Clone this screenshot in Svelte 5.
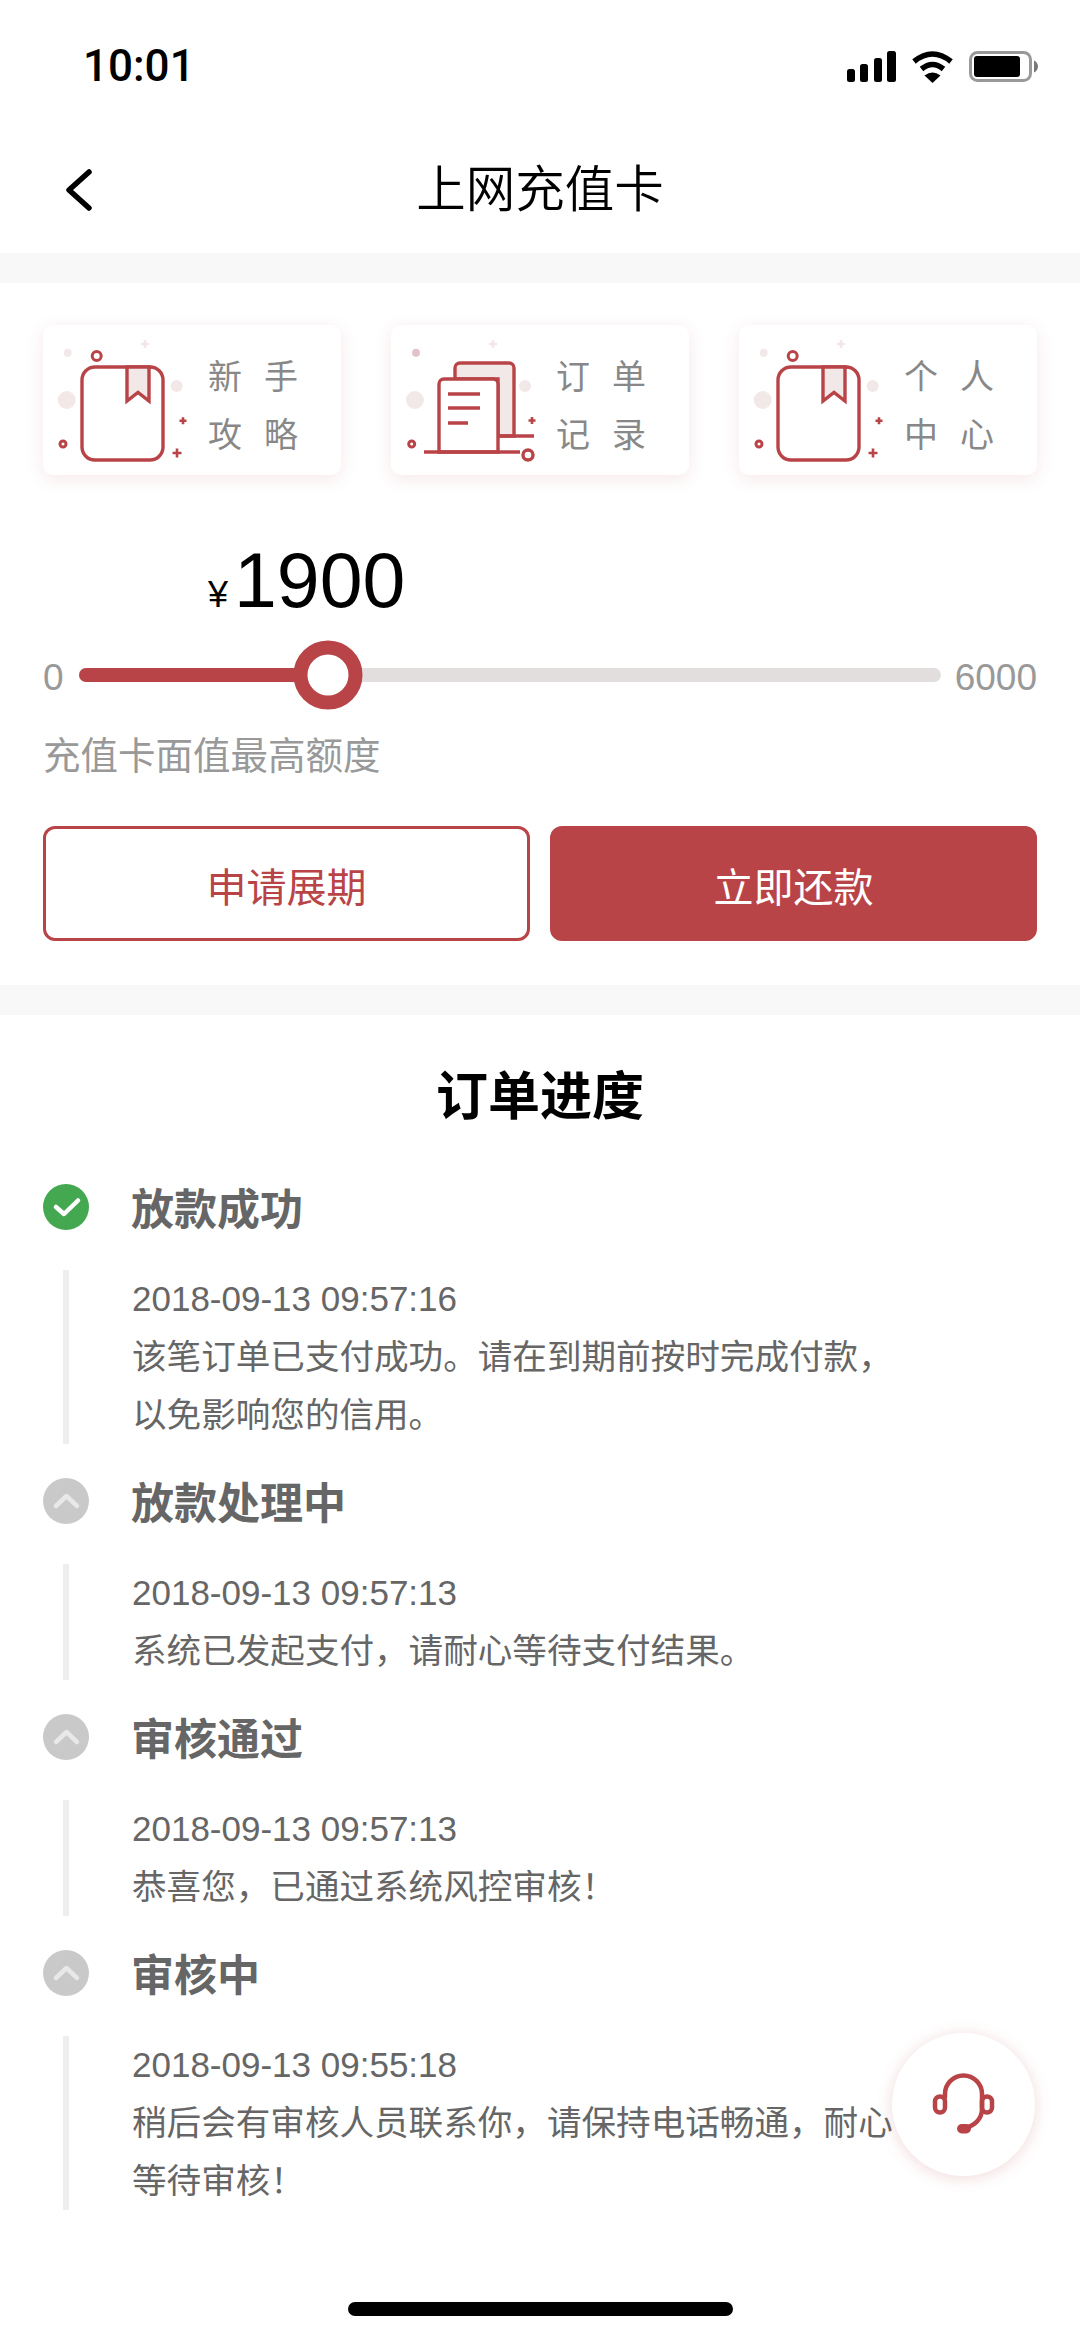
<script lang="ts">
  const steps = [
    { title: '放款成功', done: true, time: '2018-09-13 09:57:16', lines: ['该笔订单已支付成功。请在到期前按时完成付款，', '以免影响您的信用。'] },
    { title: '放款处理中', done: false, time: '2018-09-13 09:57:13', lines: ['系统已发起支付，请耐心等待支付结果。'] },
    { title: '审核通过', done: false, time: '2018-09-13 09:57:13', lines: ['恭喜您，已通过系统风控审核！'] },
    { title: '审核中', done: false, time: '2018-09-13 09:55:18', lines: ['稍后会有审核人员联系你，请保持电话畅通，耐心', '等待审核！'] }
  ];
  // thumb sits a bit left of the true 1900/6000 position in the design
  const sliderPos = 28.9;
  const red = '#b94448';
  const tint = '#f3e8e8';
</script>

{#snippet sparkle(x: number, y: number, s: number, color: string)}
  <path d="M{x - s} {y}H{x + s}M{x} {y - s}V{y + s}" stroke={color} stroke-width="2.6" fill="none" />
{/snippet}

{#snippet bookIcon()}
  <svg class="card-icon" viewBox="0 0 150 150" aria-hidden="true">
    <circle cx="24.7" cy="27.7" r="4" fill={tint} />
    <circle cx="23.7" cy="75" r="9" fill={tint} />
    <circle cx="133.7" cy="61" r="6" fill={tint} />
    {@render sparkle(102, 19, 4, tint)}
    {@render sparkle(140, 95.7, 3.5, red)}
    {@render sparkle(134, 128, 4.5, red)}
    <circle cx="53.7" cy="31" r="4.5" fill="none" stroke={red} stroke-width="3" />
    <circle cx="20" cy="119" r="3" fill="none" stroke={red} stroke-width="3" />
    <rect x="39" y="42" width="81" height="93" rx="13" fill="#fff" stroke={red} stroke-width="3.4" />
    <path d="M84 42V76L95 67.500L106 76V42Z" fill={tint} stroke={red} stroke-width="3.4" />
  </svg>
{/snippet}

{#snippet docsIcon()}
  <svg class="card-icon" viewBox="0 0 150 150" aria-hidden="true">
    <circle cx="25" cy="27.7" r="4" fill="#e2c3c7" />
    <circle cx="24" cy="75" r="9" fill={tint} />
    <circle cx="134" cy="61" r="6" fill={tint} />
    {@render sparkle(102, 19, 4, tint)}
    {@render sparkle(141, 95.5, 3.5, red)}
    <circle cx="20.700" cy="119" r="3" fill="none" stroke={red} stroke-width="3" />
    <path d="M64 54V43a5 5 0 0 1 5-5H118a5 5 0 0 1 5 5V111H107V54Z" fill={tint} stroke={red} stroke-width="3.4" />
    <path d="M48 127V59a5 5 0 0 1 5-5H102a5 5 0 0 1 5 5V127Z" fill="#fff" stroke={red} stroke-width="3.4" />
    <path d="M57 69H89M57 83H89M57 98H77M33 127H129M107 111H143" fill="none" stroke={red} stroke-width="3.4" />
    <circle cx="137" cy="130" r="5" fill="none" stroke={red} stroke-width="3.4" />
  </svg>
{/snippet}

<div class="page">
  <div class="status">
    <span class="time">10:01</span>
    <div class="status-icons">
      <svg class="signal" viewBox="0 0 49 31" aria-hidden="true">
        <rect x="0" y="18" width="8" height="13" rx="2.500" />
        <rect x="13" y="13" width="8" height="18" rx="2.500" />
        <rect x="27" y="7" width="8" height="24" rx="2.500" />
        <rect x="40" y="0" width="9" height="31" rx="2.500" />
      </svg>
      <svg class="wifi" viewBox="0 0 43 33" aria-hidden="true">
        <path d="M3 11.500Q21.500 -3.500 40 11.500M10.500 19Q21.500 10 32.500 19" fill="none" stroke="#000" stroke-width="5.500" />
        <path d="M21.500 33L13.500 25.500Q21.500 19.500 29.500 25.500Z" />
      </svg>
      <svg class="battery" viewBox="0 0 69 31" aria-hidden="true">
        <rect x="1.500" y="1.500" width="60" height="28" rx="7" fill="none" stroke="#999" stroke-width="3" />
        <rect x="5" y="5" width="46" height="21" rx="3" />
        <path d="M65 9.500C67.500 10.500 69 13 69 15.500S67.500 20.500 65 21.500Z" fill="#777" />
      </svg>
    </div>
  </div>

  <div class="nav">
    <svg class="back" viewBox="0 0 28 44" aria-hidden="true">
      <path d="M24 4L4 22L24 40" fill="none" stroke="#000" stroke-width="5.500" stroke-linecap="round" stroke-linejoin="round" />
    </svg>
    <h1>上网充值卡</h1>
  </div>

  <div class="band"></div>

  <section class="top">
    <div class="cards">
      <div class="card">
        {@render bookIcon()}
        <div class="card-text"><span>新手</span><span>攻略</span></div>
      </div>
      <div class="card">
        {@render docsIcon()}
        <div class="card-text"><span>订单</span><span>记录</span></div>
      </div>
      <div class="card">
        {@render bookIcon()}
        <div class="card-text"><span>个人</span><span>中心</span></div>
      </div>
    </div>

    <div class="amount"><span class="yen">¥</span><span class="value">1900</span></div>

    <div class="slider">
      <span class="limit">0</span>
      <div class="track">
        <div class="fill" style="width: {sliderPos}%"></div>
        <div class="thumb" style="left: {sliderPos}%"></div>
      </div>
      <span class="limit">6000</span>
    </div>

    <p class="hint">充值卡面值最高额度</p>

    <div class="actions">
      <button type="button" class="btn btn-outline">申请展期</button>
      <button type="button" class="btn btn-solid">立即还款</button>
    </div>
  </section>

  <div class="band"></div>

  <h2>订单进度</h2>

  <div class="steps">
    {#each steps as step}
      <div class="step">
        <div class="step-head">
          <span class="dot" class:dot--done={step.done}>
            <svg viewBox="0 0 46 46" aria-hidden="true">
              {#if step.done}
                <path d="M13 23L21 30L35 16.500" fill="none" stroke="#fff" stroke-width="4.500" stroke-linecap="round" stroke-linejoin="round" />
              {:else}
                <path d="M13 28L23.500 18L34 28" fill="none" stroke="#e8e8e8" stroke-width="4.500" stroke-linecap="round" stroke-linejoin="round" />
              {/if}
            </svg>
          </span>
          <h3>{step.title}</h3>
        </div>
        <div class="step-body">
          <div class="stamp">{step.time}</div>
          {#each step.lines as line}
            <div class="line">{line}</div>
          {/each}
        </div>
      </div>
    {/each}
  </div>

  <div class="home-bar"></div>

  <button type="button" class="fab" aria-label="客服">
    <svg viewBox="0 0 143 143" aria-hidden="true">
      <path d="M53 64V61a18.500 18.500 0 0 1 37 0V76C90 86 82 94 71 95" fill="none" stroke={red} stroke-width="4.500" stroke-linecap="round" />
      <rect x="43" y="63.500" width="10" height="16" rx="5" fill="none" stroke={red} stroke-width="4.500" />
      <rect x="90" y="63.500" width="10" height="16" rx="5" fill="none" stroke={red} stroke-width="4.500" />
      <rect x="65" y="91" width="14" height="9.500" rx="4.700" fill={red} />
    </svg>
  </button>
</div>

<style>
  :global(body) {
    background: #fff;
  }
  .page {
    position: relative;
    width: 1080px;
    height: 2339px;
    overflow: hidden;
    background: #fff;
    font-family: "Liberation Sans", "Noto Sans CJK SC", sans-serif;
  }
  .status {
    display: flex;
    align-items: center;
    justify-content: space-between;
    height: 132px;
    padding: 0 42px 0 83px;
    box-sizing: border-box;
  }
  .time {
    font-family: Roboto, sans-serif;
    font-weight: 500;
    font-size: 44px;
    line-height: 1;
    color: #000;
  }
  .status-icons {
    display: flex;
    align-items: center;
    gap: 15px;
  }
  .signal { width: 49px; height: 31px; }
  .wifi { width: 43px; height: 33px; }
  .battery { width: 69px; height: 31px; }
  .nav {
    position: relative;
    display: flex;
    align-items: center;
    justify-content: center;
    height: 121px;
  }
  .back {
    position: absolute;
    left: 65px;
    top: 36px;
    width: 28px;
    height: 44px;
  }
  h1 {
    margin: 0 0 6px;
    font-size: 49.5px;
    font-weight: 350;
    line-height: 1;
    color: #000;
  }
  .band {
    height: 30px;
    background: #f8f8f8;
  }
  .top {
    padding: 42px 43px 44px;
  }
  .cards {
    display: grid;
    grid-template-columns: repeat(3, 298px);
    justify-content: space-between;
  }
  .card {
    display: flex;
    height: 150px;
    gap: 15px;
    border-radius: 10px;
    background: #fff;
    box-shadow: 0 4px 18px rgba(185, 68, 72, 0.12);
  }
  .card-icon {
    flex: none;
    width: 150px;
    height: 150px;
  }
  .card-text {
    display: flex;
    flex-direction: column;
    padding-top: 23px;
    font-size: 34px;
    line-height: 58px;
    letter-spacing: 22px;
    color: #888;
  }
  .amount {
    display: flex;
    align-items: baseline;
    gap: 6px;
    height: 80px;
    margin-top: 65px;
    padding-left: 165px;
    line-height: 80px;
    color: #000;
  }
  .yen { font-size: 36px; }
  .value { font-size: 77px; }
  .slider {
    display: flex;
    align-items: center;
    height: 69px;
    margin-top: 20px;
  }
  .limit {
    padding-top: 6px;
    font-size: 37px;
    color: #999;
  }
  .track {
    position: relative;
    flex: 1;
    height: 14px;
    margin: 0 14px 0 15px;
    border-radius: 7px;
    background: #e2dede;
  }
  .fill {
    height: 100%;
    border-radius: 7px 0 0 7px;
    background: #b94448;
  }
  .thumb {
    position: absolute;
    top: 50%;
    width: 69px;
    height: 69px;
    box-sizing: border-box;
    border: 14px solid #b94448;
    border-radius: 50%;
    background: #fff;
    transform: translate(-50%, -50%);
  }
  .hint {
    margin: 22px 0 0;
    font-size: 37.5px;
    line-height: 50px;
    color: #999;
  }
  .actions {
    display: grid;
    grid-template-columns: 1fr 1fr;
    gap: 20px;
    margin-top: 45px;
  }
  .btn {
    height: 115px;
    padding: 2px 0 0;
    border: 3px solid #b94448;
    border-radius: 12px;
    font-family: inherit;
    font-size: 40px;
  }
  .btn-outline {
    background: #fff;
    color: #b94448;
  }
  .btn-solid {
    background: #b94448;
    color: #fff;
  }
  h2 {
    margin: 52px 0 57px;
    font-size: 52px;
    font-weight: 700;
    line-height: 60px;
    text-align: center;
    color: #000;
  }
  .steps {
    padding: 0 43px;
  }
  .step {
    padding-bottom: 34px;
  }
  .step:last-child {
    padding-bottom: 0;
  }
  .step-head {
    display: flex;
    align-items: center;
    gap: 42px;
    height: 46px;
  }
  .dot {
    flex: none;
    width: 46px;
    height: 46px;
    border-radius: 50%;
    background: #c9c9c9;
  }
  .dot svg {
    display: block;
    width: 46px;
    height: 46px;
  }
  .dot--done {
    background: #43a84f;
  }
  h3 {
    margin: 5px 0 0;
    font-size: 43px;
    font-weight: 700;
    line-height: 46px;
    color: #666;
  }
  .step-body {
    margin: 40px 0 0 20px;
    padding-left: 63px;
    border-left: 6px solid #eee;
    font-size: 35px;
    line-height: 58px;
    color: #666;
  }
  .stamp, .line {
    white-space: nowrap;
  }
  .line {
    font-size: 34.6px;
  }
  .home-bar {
    width: 385px;
    height: 14px;
    margin: 92px auto 0;
    border-radius: 7px;
    background: #000;
  }
  .fab {
    position: absolute;
    left: 892px;
    top: 2033px;
    width: 143px;
    height: 143px;
    padding: 0;
    border: none;
    border-radius: 50%;
    background: #fff;
    box-shadow: 0 2px 16px rgba(185, 68, 72, 0.2);
  }
  .fab svg {
    display: block;
    width: 143px;
    height: 143px;
  }
</style>
